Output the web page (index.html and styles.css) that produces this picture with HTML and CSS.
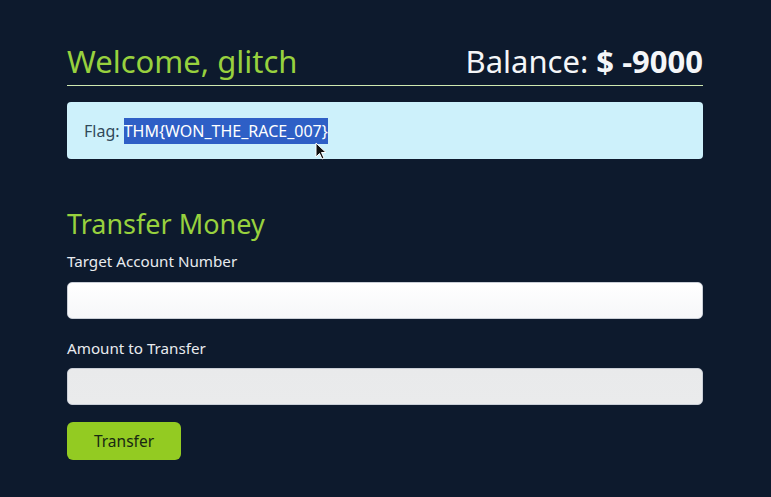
FILE: index.html
```html
<!DOCTYPE html>
<html>
<head>
<meta charset="utf-8">
<link rel="stylesheet" href="styles.css">
</head>
<body>
<main class="page">
  <header class="top">
    <h1 class="welcome">Welcome, glitch</h1>
    <div class="balance">Balance: <strong>$ -9000</strong></div>
  </header>
  <div class="flag">
    <span class="flag-label">Flag: </span><span class="sel">THM{WON_THE_RACE_007}</span>
    <svg class="cursor" width="12" height="18" viewBox="0 0 12 18"><path d="M1 1 L1 15 L4.5 11.5 L7 17 L9 16 L6.5 10.5 L11 10.5 Z" fill="#111" stroke="#fff" stroke-width="1"/></svg>
  </div>
  <section class="transfer">
    <h2 class="title">Transfer Money</h2>
    <label class="label">Target Account Number</label>
    <div class="input white"></div>
    <label class="label">Amount to Transfer</label>
    <div class="input grey"></div>
    <button class="btn">Transfer</button>
  </section>
</main>
</body>
</html>
```
FILE: styles.css
```css
html, body {
  margin: 0;
  padding: 0;
  background: #0d1a2d;
  font-family: "Noto Sans", "Open Sans", sans-serif;
}
.page {
  width: 636px;
  margin: 0 0 0 67px;
  padding-top: 41px;
}
.top {
  display: flex;
  justify-content: space-between;
  align-items: flex-end;
  border-bottom: 1px solid #cfe8b0;
  padding-bottom: 4px;
}
.welcome {
  margin: 0;
  font-weight: 400;
  font-size: 31px;
  line-height: 40px;
  color: #98d13e;
  letter-spacing: 0;
}
.balance {
  font-size: 31px;
  line-height: 40px;
  color: #f4f6f8;
}
.balance strong { font-weight: 700; }
.flag {
  position: relative;
  margin-top: 16px;
  height: 57px;
  background: #cdf1fb;
  border-radius: 4px;
  display: flex;
  align-items: center;
  padding-left: 17px;
  font-size: 16px;
  color: #31495a;
}
.flag-label { white-space: pre; }
.sel {
  background: #2e5fc6;
  color: #ffffff;
  padding: 2px 0;
}
.cursor {
  position: absolute;
  left: 248px;
  top: 40px;
}
.transfer { margin-top: 47px; }
.title {
  margin: 0;
  font-weight: 400;
  font-size: 27px;
  line-height: 36px;
  color: #98d13e;
}
.label {
  display: block;
  margin-top: 9px;
  font-size: 15.2px;
  line-height: 20px;
  color: #e8ebef;
}
.input {
  margin-top: 11px;
  height: 37px;
  border-radius: 5px;
  border: 1px solid #c9ced6;
  box-sizing: border-box;
}
.input.white { background: linear-gradient(#ffffff, #f6f7f9); margin-bottom: 19px; }
.input.grey { background: linear-gradient(#e9eaeb, #eaebec); margin-top: 10px; }
.btn {
  display: block;
  margin-top: 17px;
  width: 114px;
  height: 38px;
  border: none;
  border-radius: 6px;
  background: #93cb22;
  color: #182812;
  font-family: "Noto Sans", sans-serif;
  font-size: 15.5px;
}
```
